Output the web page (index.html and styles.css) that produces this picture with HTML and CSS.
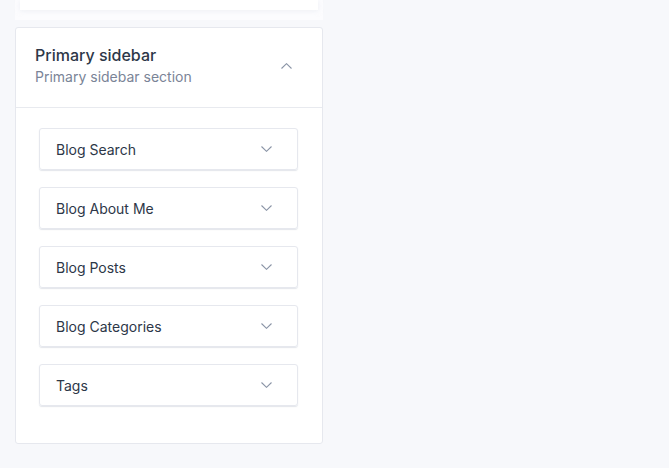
FILE: index.html
```html
<!DOCTYPE html>
<html>
<head>
<meta charset="utf-8">
<link rel="stylesheet" href="styles.css">
</head>
<body>
<div class="column">
  <div class="prev-card"><div class="prev-inner"></div></div>
  <section class="panel">
    <header class="panel-head">
      <div class="head-text">
        <div class="title">Primary sidebar</div>
        <div class="subtitle">Primary sidebar section</div>
      </div>
      <svg class="chev" width="11" height="6" viewBox="0 0 11 6"><path d="M0.5 5.5 L5.5 0.7 L10.5 5.5" fill="none" stroke="#8a94a6" stroke-width="1.1"/></svg>
    </header>
    <div class="panel-body">
      <div class="item"><span>Blog Search</span><svg class="chev" width="11" height="6" viewBox="0 0 11 6"><path d="M0.5 0.5 L5.5 5.3 L10.5 0.5" fill="none" stroke="#8a94a6" stroke-width="1.1"/></svg></div>
      <div class="item"><span>Blog About Me</span><svg class="chev" width="11" height="6" viewBox="0 0 11 6"><path d="M0.5 0.5 L5.5 5.3 L10.5 0.5" fill="none" stroke="#8a94a6" stroke-width="1.1"/></svg></div>
      <div class="item"><span>Blog Posts</span><svg class="chev" width="11" height="6" viewBox="0 0 11 6"><path d="M0.5 0.5 L5.5 5.3 L10.5 0.5" fill="none" stroke="#8a94a6" stroke-width="1.1"/></svg></div>
      <div class="item"><span>Blog Categories</span><svg class="chev" width="11" height="6" viewBox="0 0 11 6"><path d="M0.5 0.5 L5.5 5.3 L10.5 0.5" fill="none" stroke="#8a94a6" stroke-width="1.1"/></svg></div>
      <div class="item"><span>Tags</span><svg class="chev" width="11" height="6" viewBox="0 0 11 6"><path d="M0.5 0.5 L5.5 5.3 L10.5 0.5" fill="none" stroke="#8a94a6" stroke-width="1.1"/></svg></div>
    </div>
  </section>
</div>
</body>
</html>
```
FILE: styles.css
```css
html, body {
  margin: 0;
  padding: 0;
  background: #f7f8fb;
  font-family: Inter, "Noto Sans", sans-serif;
  color: #2d3748;
}
.column {
  width: 308px;
  margin-left: 15px;
  display: flex;
  flex-direction: column;
}
.prev-card {
  height: 20px;
  background: #fcfcfe;
  display: flex;
  justify-content: center;
}
.prev-inner {
  width: 298px;
  height: 10px;
  background: #ffffff;
  box-shadow: 0 1px 5px rgba(225, 229, 238, 0.5);
}
.panel {
  margin-top: 7px;
  background: #ffffff;
  border: 1px solid #e6e8ee;
  border-radius: 3px;
}
.panel-head {
  display: flex;
  align-items: center;
  justify-content: space-between;
  padding: 16px 30px 19px 19px;
  border-bottom: 1px solid #e8eaef;
}
.title {
  font-size: 16px;
  line-height: 22px;
  font-weight: 500;
  color: #2d3748;
}
.subtitle {
  font-size: 14px;
  line-height: 22px;
  color: #7a8497;
}
.panel-body {
  padding: 20px 24px 20px 23px;
  display: flex;
  flex-direction: column;
}
.item {
  height: 40px;
  border: 1px solid #e6e8ee;
  border-radius: 3px;
  box-shadow: 0 1px 1px rgba(200, 205, 215, 0.5);
  margin-bottom: 17px;
  display: flex;
  align-items: center;
  justify-content: space-between;
  padding: 0 25px 0 16px;
  font-size: 14px;
  color: #2d3748;
}
```
